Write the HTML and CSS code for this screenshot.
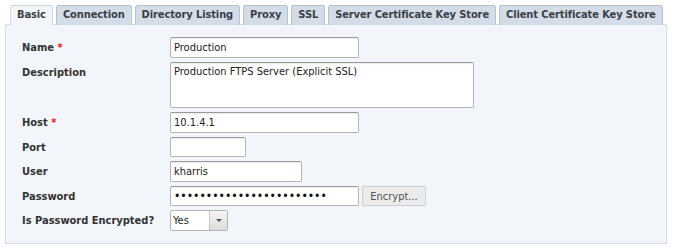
FILE: index.html
```html
<!DOCTYPE html>
<html lang="en">

<head>
    <meta charset="UTF-8">
    <title>FTPS Server - Basic</title>
    <link rel="stylesheet" href="styles.css">
</head>

<body>
    <div class="tabs">
        <div class="tab active">Basic</div>
        <div class="tab">Connection</div>
        <div class="tab">Directory Listing</div>
        <div class="tab">Proxy</div>
        <div class="tab">SSL</div>
        <div class="tab">Server Certificate Key Store</div>
        <div class="tab">Client Certificate Key Store</div>
    </div>

    <!-- Basic settings form -->
    <div class="panel">
        <div class="form-grid">
            <label class="field-label">Name <span class="req">*</span></label>
            <div><input class="text-input w-long" type="text" value="Production"></div>

            <label class="field-label">Description</label>
            <div><textarea class="text-area">Production FTPS Server (Explicit SSL)</textarea></div>

            <label class="field-label">Host <span class="req">*</span></label>
            <div><input class="text-input w-long" type="text" value="10.1.4.1"></div>

            <label class="field-label">Port</label>
            <div><input class="text-input w-short" type="text" value=""></div>

            <label class="field-label">User</label>
            <div><input class="text-input w-mid" type="text" value="kharris"></div>

            <label class="field-label">Password</label>
            <div class="inline">
                <input class="text-input w-long pass" type="password" value="abcdefghijklmnopqrstuvwx">
                <button class="btn">Encrypt...</button>
            </div>

            <label class="field-label">Is Password Encrypted?</label>
            <div>
                <div class="combo">
                    <span class="combo-value">Yes</span>
                    <span class="combo-arrow"></span>
                </div>
            </div>
        </div>
    </div>
</body>

</html>
```

FILE: styles.css
```css
* {
    margin: 0;
    padding: 0;
    box-sizing: border-box;
}

body {
    font-family: 'DejaVu Sans Condensed', 'DejaVu Sans', sans-serif;
    font-size: 11px;
    background-color: #fff;
    color: #333;
    padding: 5px;
}

.tabs {
    display: flex;
    gap: 3px;
    padding-left: 5px;
}

.tab {
    flex-shrink: 0;
    white-space: nowrap;
    height: 20px;
    line-height: 18px;
    padding: 0 6px;
    font-weight: bold;
    letter-spacing: -0.1px;
    color: #3a3f47;
    background-color: #d3dce7;
    border: 1px solid #b7c2cf;
    border-bottom: none;
    border-radius: 3px 3px 0 0;
    margin-bottom: -1px;
}

.tab.active {
    background-color: #f2f5fa;
    border-color: #d0d6de;
    position: relative;
}

.panel {
    width: 662px;
    background-color: #f2f5fa;
    border: 1px solid #d8dde4;
    padding: 12px 16px 12px 16px;
}

.form-grid {
    display: grid;
    grid-template-columns: 148px 1fr;
    row-gap: 4px;
}

.field-label {
    font-weight: bold;
    color: #333;
    padding-top: 4px;
}

.req {
    color: #e41b17;
}

.text-input {
    display: block;
    height: 21px;
    padding: 0 3px;
    font-family: inherit;
    font-size: 11px;
    color: #222;
    background-color: #fff;
    border: 1px solid #b4b4b4;
    border-top-color: #9a9a9a;
    border-radius: 2px;
    box-shadow: inset 0 1px 1px rgba(0, 0, 0, 0.08);
    outline: none;
}

.w-long {
    width: 189px;
}

.w-mid {
    width: 132px;
}

.w-short {
    width: 76px;
    height: 20px;
}

.pass {
    height: 20px;
    font-size: 12px;
    color: #111;
}

.text-area {
    display: block;
    width: 304px;
    height: 46px;
    padding: 2px 3px;
    font-family: inherit;
    font-size: 11px;
    color: #222;
    background-color: #fff;
    border: 1px solid #b4b4b4;
    border-top-color: #9a9a9a;
    border-radius: 2px;
    resize: none;
    box-shadow: inset 0 1px 1px rgba(0, 0, 0, 0.08);
}

.inline {
    display: flex;
    gap: 3px;
}

.btn {
    height: 20px;
    width: 64px;
    font-family: inherit;
    font-size: 11px;
    color: #555;
    background-color: #ebebeb;
    border: 1px solid #cfcfcf;
    border-radius: 1px;
}

.combo {
    display: flex;
    width: 58px;
    height: 21px;
    background-color: #fff;
    border: 1px solid #b4b4b4;
    border-radius: 2px;
}

.combo-value {
    flex: 1;
    line-height: 19px;
    padding-left: 2px;
    color: #222;
}

.combo-arrow {
    width: 18px;
    border-left: 1px solid #c4c4c4;
    background: linear-gradient(#f4f4f4, #dcdcdc);
    display: flex;
    align-items: center;
    justify-content: center;
}

.combo-arrow::after {
    content: "";
    border-left: 3px solid transparent;
    border-right: 3px solid transparent;
    border-top: 3px solid #4a5866;
}
```
